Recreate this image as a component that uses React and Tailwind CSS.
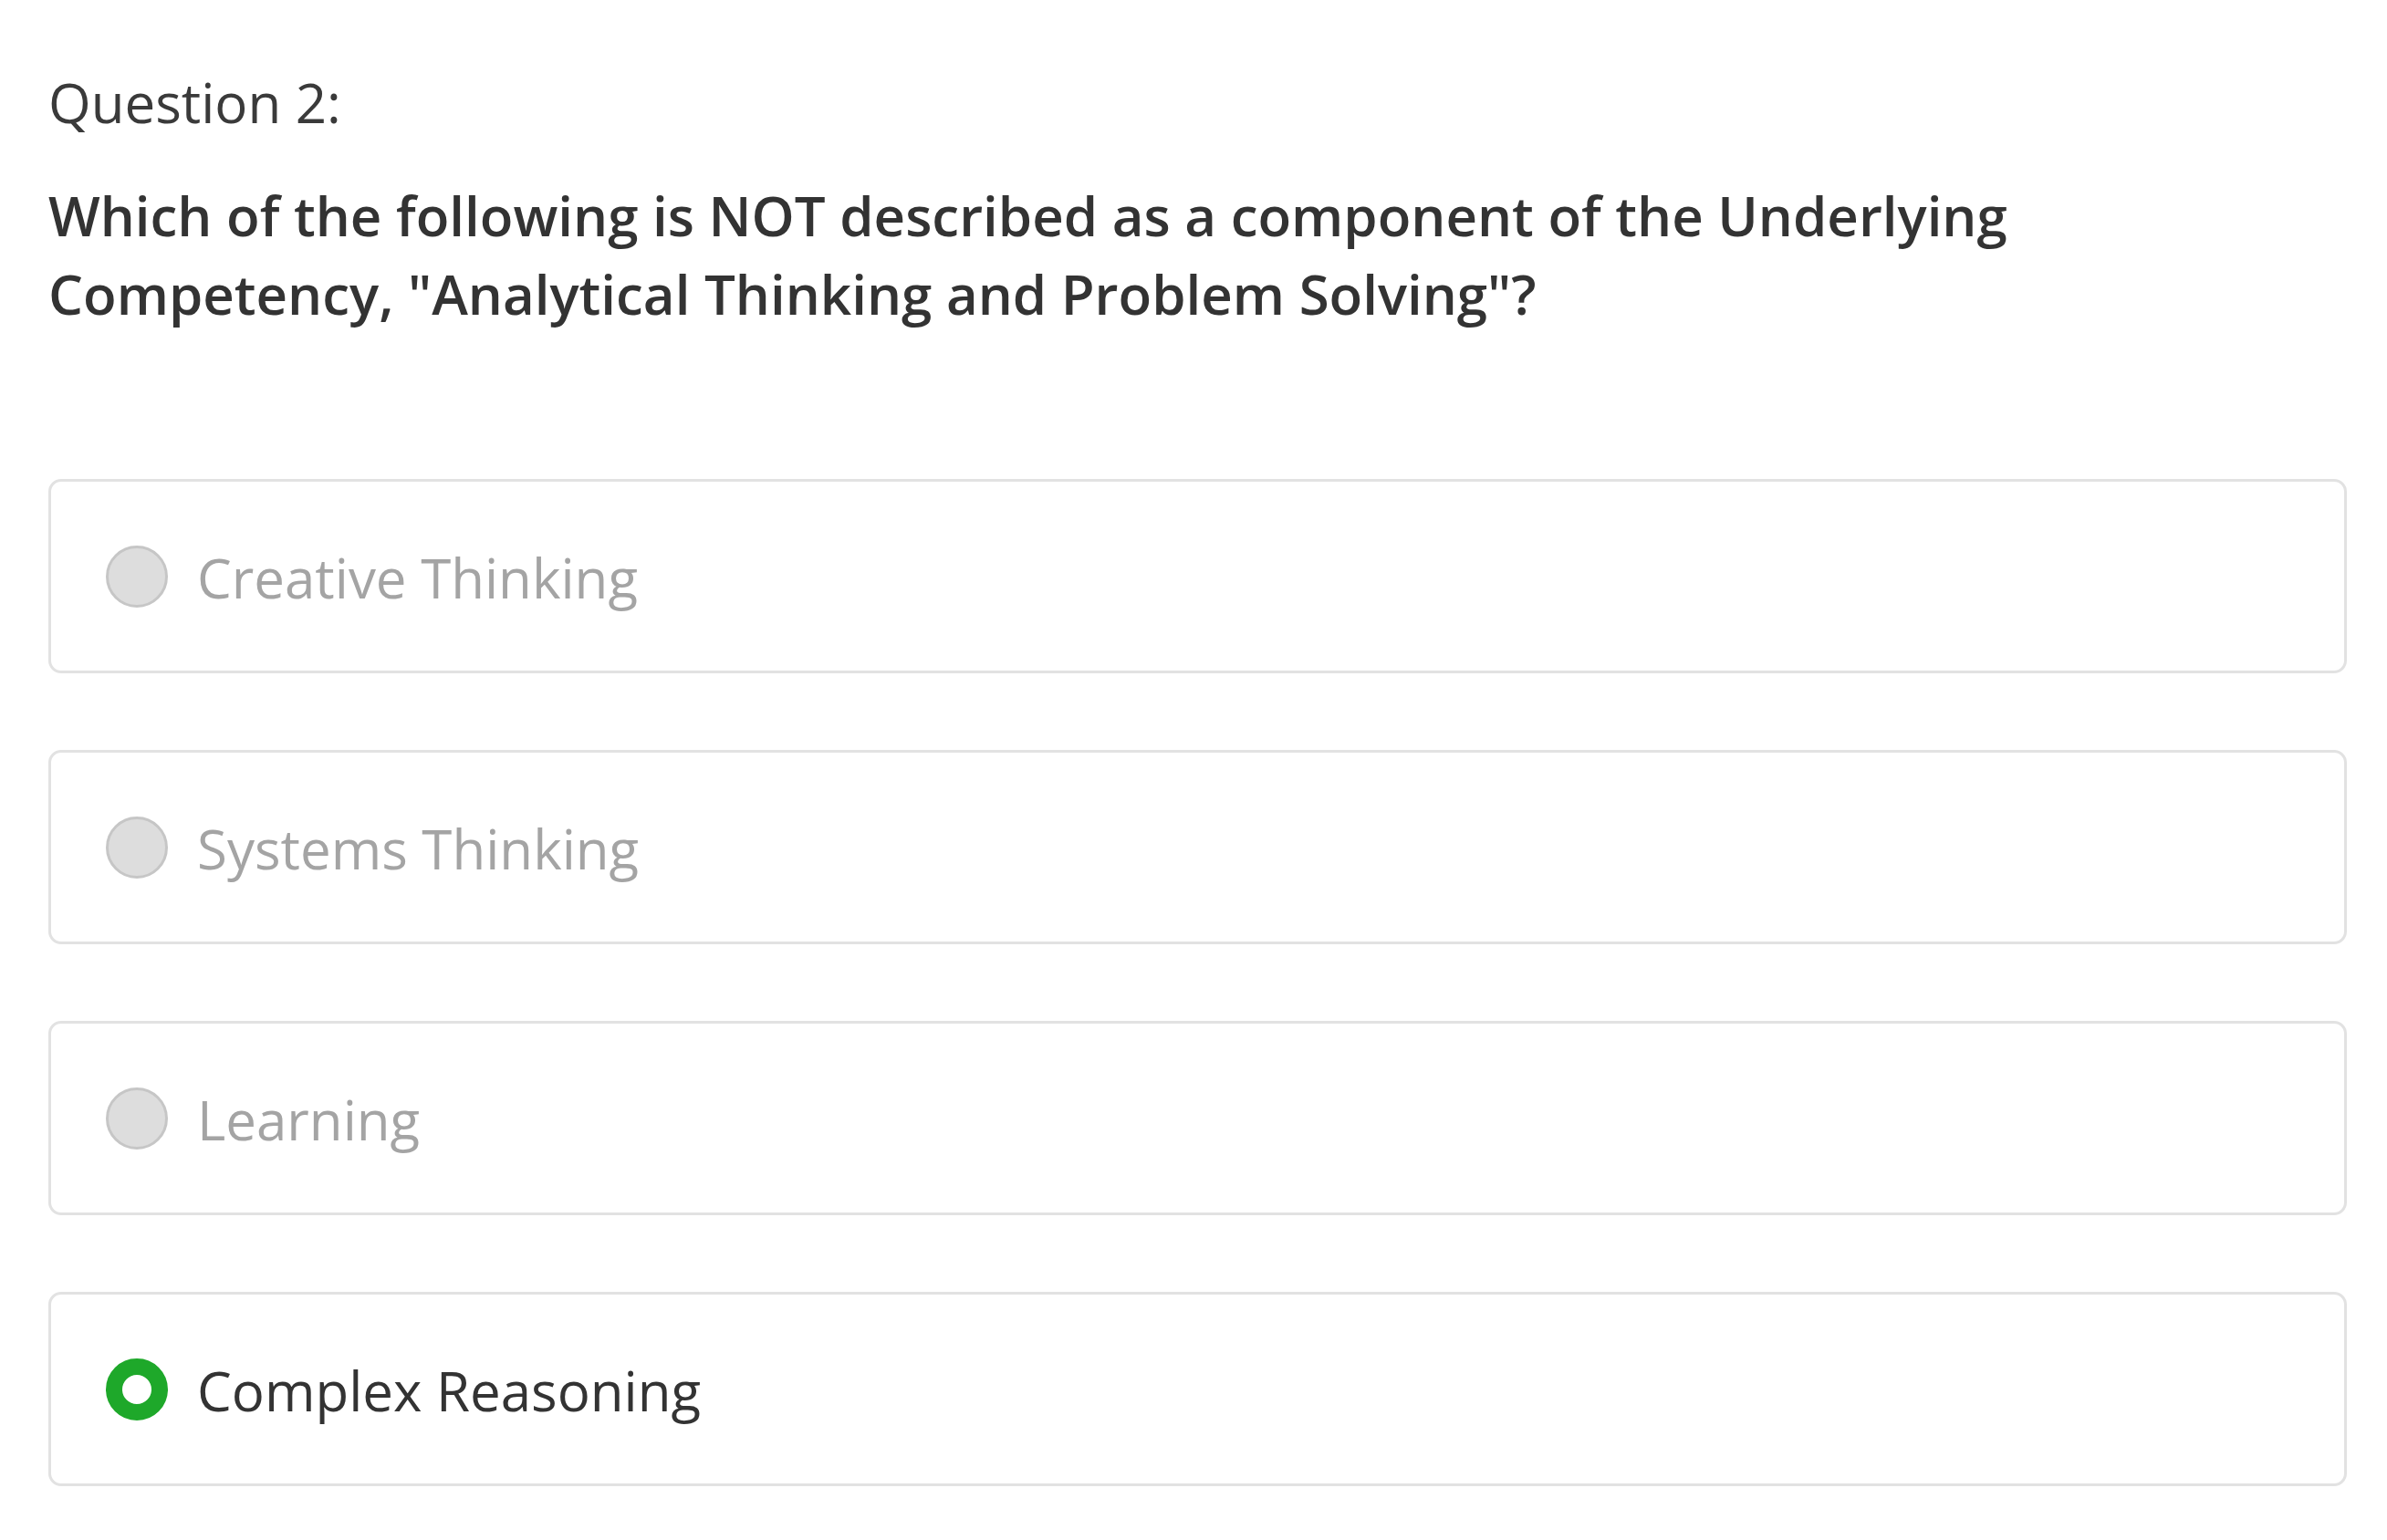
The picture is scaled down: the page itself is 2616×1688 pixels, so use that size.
const options = [
  { id: 1, label: "Creative Thinking" },
  { id: 2, label: "Systems Thinking" },
  { id: 3, label: "Learning" },
  { id: 4, label: "Complex Reasoning" },
];

function Radio({ checked }) {
  if (checked) {
    return (
      <span className="box-border block h-[68px] w-[68px] shrink-0 rounded-full border-[18px] border-[#1ea82a] bg-white" />
    );
  }
  return (
    <span className="box-border block h-[68px] w-[68px] shrink-0 rounded-full border-[3px] border-[#c6c6c6] bg-[#dddddd]" />
  );
}

export default function App() {
  const selected = 4;

  return (
    <div
      className="min-h-screen bg-white pl-[53px] pr-[44px] pt-[69px] pb-[60px]"
      style={{ fontFamily: '"Open Sans", "Noto Sans", sans-serif' }}
    >
      <p className="text-[60px] leading-[87px] text-[#3a3a3a]">Question 2:</p>
      <h2 className="mt-[37px] text-[60px] leading-[86px] font-semibold text-[#333333]">
        Which of the following is NOT described as a component of the Underlying
        <br />
        Competency, "Analytical Thinking and Problem Solving"?
      </h2>

      <div className="mt-[160px] flex flex-col gap-[84px]">
        {options.map((o) => {
          const isOn = o.id === selected;
          return (
            <label
              key={o.id}
              className="box-border flex h-[213px] items-center gap-[32px] rounded-[14px] border-[3px] border-[#e2e2e2] bg-white pl-[60px]"
            >
              <Radio checked={isOn} />
              <span
                className={
                  "pt-[4px] text-[60px] leading-[87px] " +
                  (isOn ? "text-[#333333]" : "text-[#a4a4a4]")
                }
              >
                {o.label}
              </span>
            </label>
          );
        })}
      </div>
    </div>
  );
}
